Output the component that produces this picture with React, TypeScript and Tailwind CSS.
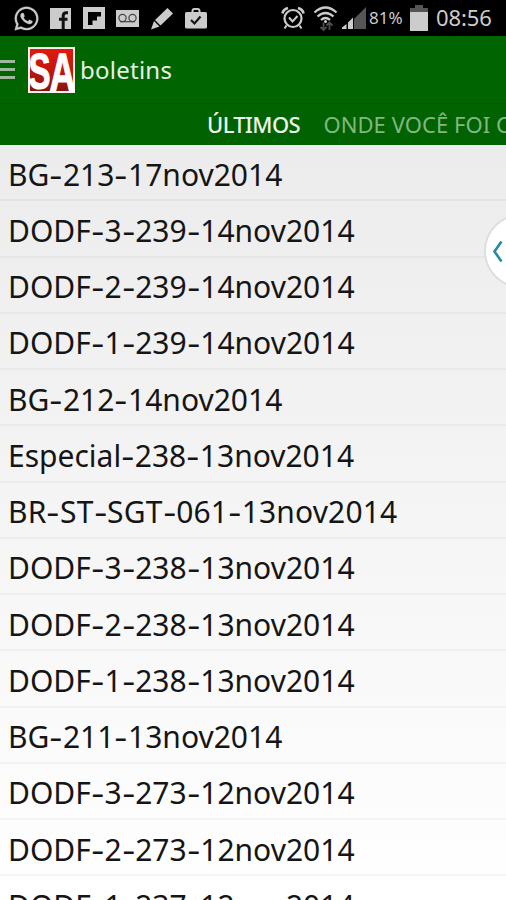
import React from "react";
import { FaWhatsapp } from "react-icons/fa";

const rows = [
  "BG-213-17nov2014",
  "DODF-3-239-14nov2014",
  "DODF-2-239-14nov2014",
  "DODF-1-239-14nov2014",
  "BG-212-14nov2014",
  "Especial-238-13nov2014",
  "BR-ST-SGT-061-13nov2014",
  "DODF-3-238-13nov2014",
  "DODF-2-238-13nov2014",
  "DODF-1-238-13nov2014",
  "BG-211-13nov2014",
  "DODF-3-273-12nov2014",
  "DODF-2-273-12nov2014",
  "DODF-1-237-12nov2014",
];

function Label({ text }: { text: string }) {
  const parts = text.split("-");
  return (
    <span className={text.startsWith("BR") ? "whitespace-nowrap tracking-[0.15px]" : "whitespace-nowrap"}>
      {parts.map((part, i) => (
        <React.Fragment key={i}>
          {i > 0 && <span className="inline-block w-[13.6px] scale-x-[1.35] text-center">-</span>}
          {part}
        </React.Fragment>
      ))}
    </span>
  );
}

function StatusBar() {
  return (
    <div className="flex h-9 shrink-0 items-center bg-black text-[#cccccc]">
      <FaWhatsapp className="ml-[13px] h-[27px] w-[27px] shrink-0" stroke="currentColor" strokeWidth={6} />
      <svg className="ml-[10px] h-[21px] w-[21px] shrink-0" viewBox="0 0 21 21">
        <rect width="21" height="21" fill="currentColor" />
        <path d="M18 4.800h-1.800q-3 0-3 3V21M9 11.200h8.500" fill="none" stroke="#111" strokeWidth="3" />
      </svg>
      <svg className="ml-3 h-[22px] w-[22px] shrink-0" viewBox="0 0 22 22">
        <path fill="currentColor" fillRule="evenodd" d="M0 0h22v22H0zM5 5v13h4.500v-4.500H14V9.500h4V5z" />
      </svg>
      <svg className="ml-[11px] h-[17px] w-[23px] shrink-0" viewBox="0 0 23 17">
        <rect width="23" height="17" fill="currentColor" />
        <g fill="none" stroke="#444" strokeWidth="1.200">
          <circle cx="6.500" cy="8" r="3.600" />
          <circle cx="16.500" cy="8" r="3.600" />
          <path d="M4 11.700h15" />
        </g>
      </svg>
      <svg className="ml-3 h-[23px] w-[23px] shrink-0" viewBox="0 0 23 23">
        <path fill="currentColor" d="M16.500 1 22 6.500 9.500 18.500 4 13zM3 14l5.500 5.500L0 22.500z" />
      </svg>
      <svg className="ml-[11px] h-[22px] w-[22px] shrink-0" viewBox="0 0 22 22">
        <path d="M7.500 6V4q0-2 2-2h3q2 0 2 2v2" fill="none" stroke="currentColor" strokeWidth="2" />
        <rect y="5" width="22" height="16.500" rx="1.500" fill="currentColor" />
        <path d="m6 13 3.500 3.500 6-7" fill="none" stroke="#151515" strokeWidth="2.200" />
      </svg>
      <svg className="ml-[74px] h-6 w-6 shrink-0" viewBox="0 0 24 24" fill="none" stroke="currentColor">
        <circle cx="12" cy="12.500" r="8.500" strokeWidth="2.200" />
        <path d="m8 11.500 3.500 4 5-5.500M5.500 19.500 3.500 22.500M18.500 19.500l2 3" strokeWidth="2" />
        <path d="M1.500 7.500Q2 3.500 7 2M22.500 7.500Q22 3.500 17 2" strokeWidth="2.600" />
      </svg>
      <svg className="ml-2 h-[27px] w-[25px] shrink-0" viewBox="0 0 25 27" fill="none">
        <g stroke="currentColor" strokeWidth="2.300">
          <path d="M1.500 7.500Q12.500-2.500 23.500 7.500M4.500 11.500q8-7 16 0M8 15q4.500-4 9 0" />
        </g>
        <circle cx="12.500" cy="16.500" r="1.500" fill="currentColor" />
        <path d="M10.500 17.500v7m-3-2.500 3 3 3-3M16.500 25v-7m-3 2.500 3-3 3 3" stroke="#4c4c4c" strokeWidth="1.800" />
      </svg>
      <svg className="ml-1 h-[23px] w-6 shrink-0" viewBox="0 0 24 23">
        <path d="M12 12 24 0v22H12z" fill="#555" />
        <path d="M0 22v-1.500L4.500 17v5zM6 22v-6.500l5-5V22z" fill="currentColor" />
      </svg>
      <span className="ml-[3px] w-[36px] shrink-0 whitespace-nowrap text-[17px] leading-9">81%</span>
      <svg className="ml-[5px] h-[26px] w-[18px] shrink-0" viewBox="0 0 18 26">
        <path d="M5 0h8v3h5v4H0V3h5z" fill="#555" />
        <path d="M0 7h18v19H0z" fill="currentColor" />
      </svg>
      <span className="ml-2 whitespace-nowrap pb-[2px] text-[22px] leading-[34px] tracking-[-0.1px]">08:56</span>
    </div>
  );
}

function Logo() {
  return (
    <svg className="ml-[13px] h-[46px] w-[47px] shrink-0" viewBox="0 0 47 46">
      <defs>
        <linearGradient id="red" x2="0" y2="1">
          <stop offset="0" stopColor="#e01a0c" />
          <stop offset=".5" stopColor="#c41610" />
          <stop offset="1" stopColor="#86150f" />
        </linearGradient>
      </defs>
      <rect width="47" height="46" fill="#f7eeee" />
      <rect x="2" y="2" width="43" height="42" fill="url(#red)" />
      <g fontFamily="Liberation Sans, sans-serif" fontWeight="700" fontSize="50" fill="white" stroke="white" strokeWidth="1.200">
        <text transform="translate(.5 42) scale(.66 1)">S</text>
        <text transform="translate(21.500 43.500) scale(.72 1.060)">A</text>
      </g>
    </svg>
  );
}

export default function App() {
  return (
    <div className="relative flex h-[900px] w-[506px] flex-col overflow-hidden bg-white font-['Noto_Sans',sans-serif]">
      <StatusBar />
      <header className="flex h-[67px] shrink-0 items-center bg-[#006500] text-[#e8f0e6]">
        <div className="flex w-[15px] flex-col gap-[5px]">
          <div className="h-[3px] bg-[#a0b79e]" />
          <div className="h-[3px] bg-[#a0b79e]" />
          <div className="h-[3px] bg-[#a0b79e]" />
        </div>
        <Logo />
        <h1 className="ml-[5px] text-[24px] leading-8 tracking-[0.25px]">boletins</h1>
      </header>
      <nav className="flex h-[42px] shrink-0 items-center gap-6 overflow-hidden border-t border-[#005800] bg-[#006200] pl-[207px] text-[22px] whitespace-nowrap">
        <span className="w-[92.500px] shrink-0 font-medium tracking-[-0.6px] text-[#edf5eb]">ÚLTIMOS</span>
        <span className="shrink-0 tracking-[0.05px] text-[#83b681]">ONDE VOCÊ FOI CITADO</span>
      </nav>
      <main className="h-[755px] shrink-0 overflow-hidden bg-linear-to-b from-[#ececec] via-[#f5f5f5] to-white">
        {rows.map((text) => (
          <div key={text} className="flex h-[56.25px] items-center border-b-2 border-black/[0.035] pt-[4px] pl-[8px] text-[30px] leading-[49px] text-[#151515]">
            <Label text={text} />
          </div>
        ))}
      </main>
      <div className="absolute top-[214px] left-[484px] flex h-[74px] w-[74px] items-center rounded-full border-2 border-[#dedede] bg-white pl-[6px]">
        <svg className="h-[23px] w-[11px]" viewBox="0 0 11 23">
          <path d="M9.500 1.500 2.500 11.500l7 10" fill="none" stroke="#268ba3" strokeWidth="2.600" />
        </svg>
      </div>
    </div>
  );
}
